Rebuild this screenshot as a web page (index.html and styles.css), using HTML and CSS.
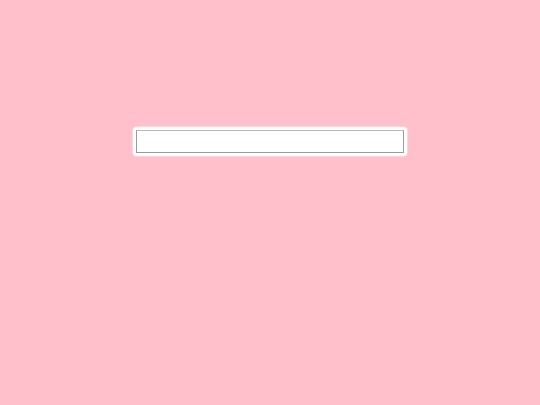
FILE: index.html
```html
<!DOCTYPE html>
<html>
<head>
<meta charset="utf-8">
<link rel="stylesheet" href="styles.css">
</head>
<body>
<div class="page">
  <div class="box">
    <input class="field" type="text">
  </div>
</div>
</body>
</html>
```

FILE: styles.css
```css
html, body {
  margin: 0;
  padding: 0;
  background: #ffc0cb;
  width: 540px;
  height: 405px;
  overflow: hidden;
}
.page {
  padding-top: 127px;
  padding-left: 133px;
}
.box {
  width: 268px;
  padding: 3px;
  background: #ffffff;
  border-radius: 4px;
  box-shadow: 0 0 1px 1px rgba(255, 255, 255, 0.35);
}
.field {
  display: block;
  box-sizing: border-box;
  width: 268px;
  height: 23px;
  margin: 0;
  padding: 0 4px;
  border: 1px solid #9a9a9a;
  border-top-color: #b8b8b8;
  border-radius: 0;
  background: #ffffff;
  font-family: "Liberation Sans", sans-serif;
  font-size: 13px;
  outline: none;
}
```
